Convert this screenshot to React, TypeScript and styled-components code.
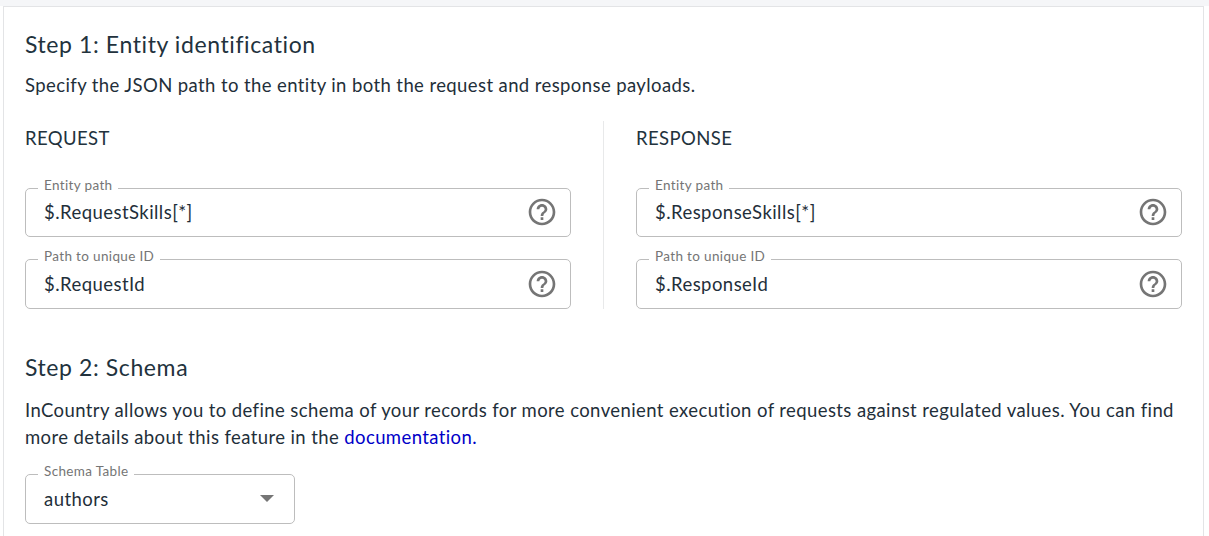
import React from "react";
import styled, { createGlobalStyle } from "styled-components";

const Global = createGlobalStyle`
  html, body { margin: 0; padding: 0; background: #fff; }
  body { font-family: Lato, "Noto Sans", sans-serif; color: #1f2f3a; overflow: hidden; }
`;
const Page = styled.div`
  width: 1209px;
  height: 536px;
  background: #fff;
  overflow: hidden;
`;
const TopStrip = styled.div`
  height: 6px;
  background: #f5f6f8;
`;
const Card = styled.section`
  margin: 0 5px 0 3px;
  height: 600px;
  box-sizing: border-box;
  background: #fff;
  border: 1px solid #e3e4e6;
  border-width: 1px 1px 0 1px;
  padding: 23px 21px 0 21px;
`;
const Heading = styled.h2`
  margin: 0;
  font-size: 23px;
  line-height: 28px;
  font-weight: 400;
  letter-spacing: 0.6px;
  color: #22323d;
`;
const Paragraph = styled.p<{ $mt: number }>`
  margin: ${(p) => p.$mt}px 0 0;
  font-size: 18.5px;
  line-height: 27.5px;
  letter-spacing: 0.4px;
  color: #1f2f3a;
`;
const Link = styled.a`
  color: #0000c8;
  text-decoration: none;
`;
const Columns = styled.div`
  display: grid;
  grid-template-columns: 546px 1px 546px;
  column-gap: 32px;
  margin-top: 21px;
`;
const Column = styled.div`
  display: flex;
  flex-direction: column;
`;
const Divider = styled.div`
  background: #e8e9ea;
`;
const ColumnTitle = styled.h3`
  margin: 5px 0 38px;
  font-size: 18.5px;
  line-height: 24px;
  font-weight: 400;
  letter-spacing: 0.4px;
  color: #22323d;
`;
const Field = styled.div<{ $h: number; $mb?: number; $w?: number }>`
  position: relative;
  box-sizing: border-box;
  height: ${(p) => p.$h}px;
  width: ${(p) => (p.$w ? `${p.$w}px` : "100%")};
  margin-bottom: ${(p) => p.$mb ?? 0}px;
  border: 1px solid #bdbdbd;
  border-radius: 5px;
  display: flex;
  align-items: center;
  justify-content: space-between;
  padding: 0 12px 0 18px;
`;
const FieldLabel = styled.span`
  position: absolute;
  top: -13px;
  left: 12px;
  padding: 0 6px;
  background: #fff;
  font-size: 13.5px;
  line-height: 18px;
  letter-spacing: 0.35px;
  color: #757575;
`;
const Value = styled.span`
  font-size: 18.5px;
  letter-spacing: 0.45px;
  color: #1f2f3a;
`;
const IconSlot = styled.span`
  display: flex;
  width: 32px;
  height: 32px;
`;
const Caret = styled.span`
  width: 0;
  height: 0;
  margin-right: 8px;
  border-left: 7px solid transparent;
  border-right: 7px solid transparent;
  border-top: 7px solid #757575;
`;
const SchemaTitle = styled(Heading)`
  margin-top: 44px;
`;
const SchemaField = styled.div`
  margin-top: 22px;
`;

const HelpIcon = () => (
  <IconSlot>
    <svg width="32" height="32" viewBox="0 0 24 24" fill="#757575">
      <path d="M11 18h2v-2h-2v2zm1-16C6.48 2 2 6.48 2 12s4.48 10 10 10 10-4.48 10-10S17.52 2 12 2zm0 18c-4.41 0-8-3.59-8-8s3.59-8 8-8 8 3.59 8 8-3.59 8-8 8zm0-14c-2.21 0-4 1.79-4 4h2c0-1.1.9-2 2-2s2 .9 2 2c0 2-3 1.75-3 5h2c0-2.25 3-2.5 3-5 0-2.21-1.79-4-4-4z" />
    </svg>
  </IconSlot>
);

const PathField = ({ label, value, h, mb }: { label: string; value: string; h: number; mb?: number }) => (
  <Field $h={h} $mb={mb}>
    <FieldLabel>{label}</FieldLabel>
    <Value>{value}</Value>
    <HelpIcon />
  </Field>
);

export default function App() {
  return (
    <Page>
      <Global />
      <TopStrip />
      <Card>
        <Heading>Step 1: Entity identification</Heading>
        <Paragraph $mt={14}>Specify the JSON path to the entity in both the request and response payloads.</Paragraph>
        <Columns>
          <Column>
            <ColumnTitle>REQUEST</ColumnTitle>
            <PathField label="Entity path" value="$.RequestSkills[*]" h={49} mb={22} />
            <PathField label="Path to unique ID" value="$.RequestId" h={50} />
          </Column>
          <Divider />
          <Column>
            <ColumnTitle>RESPONSE</ColumnTitle>
            <PathField label="Entity path" value="$.ResponseSkills[*]" h={49} mb={22} />
            <PathField label="Path to unique ID" value="$.ResponseId" h={50} />
          </Column>
        </Columns>
        <SchemaTitle>Step 2: Schema</SchemaTitle>
        <Paragraph $mt={16}>
          InCountry allows you to define schema of your records for more convenient execution of requests against regulated values. You can find more details about this feature in the <Link href="#">documentation.</Link>
        </Paragraph>
        <SchemaField>
          <Field $h={50} $w={270}>
            <FieldLabel>Schema Table</FieldLabel>
            <Value>authors</Value>
            <Caret />
          </Field>
        </SchemaField>
      </Card>
    </Page>
  );
}
